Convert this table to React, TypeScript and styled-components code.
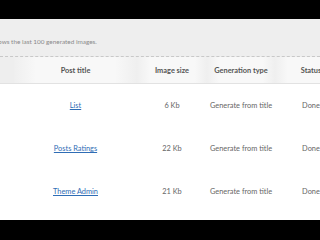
import * as React from "react";
import { createGlobalStyle, styled } from "styled-components";

interface ImageRow {
    id: string;
    title: string;
    size: string;
    type: string;
    status: string;
}

const rows: ImageRow[] = [
    { id: "1", title: "List", size: "6 Kb", type: "Generate from title", status: "Done" },
    { id: "2", title: "Posts Ratings", size: "22 Kb", type: "Generate from title", status: "Done" },
    { id: "3", title: "Theme Admin", size: "21 Kb", type: "Generate from title", status: "Done" },
];

const columns = "14px 123px 70px 68px 72px";

export default function App() {
    return (
        <>
            <GlobalStyle />
            <Screen>
                <TopBar />
                <Notice>
                    <NoticeText>This table shows the last 100 generated images.</NoticeText>
                </Notice>
                <Table>
                    <HeaderRow>
                        <HeaderCell $edge />
                        <HeaderCell>Post title</HeaderCell>
                        <HeaderCell>Image size</HeaderCell>
                        <HeaderCell>Generation type</HeaderCell>
                        <HeaderCell>Status</HeaderCell>
                    </HeaderRow>
                    {rows.map((row) => (
                        <Row key={row.id}>
                            <Cell />
                            <Cell>
                                <PostLink href="#">{row.title}</PostLink>
                            </Cell>
                            <Cell>{row.size}</Cell>
                            <Cell>{row.type}</Cell>
                            <Cell>{row.status}</Cell>
                        </Row>
                    ))}
                </Table>
                <BottomBar />
            </Screen>
        </>
    );
}

const GlobalStyle = createGlobalStyle`
    html, body {
        margin: 0;
        padding: 0;
        background: #000;
    }
    body {
        font-family: Lato, "Open Sans", sans-serif;
    }
`;

const Screen = styled.div`
    width: 320px;
    height: 240px;
    overflow: hidden;
    display: flex;
    flex-direction: column;
    background: #fff;
`;

const TopBar = styled.div`
    height: 19px;
    flex: none;
    background: #000;
`;

const Notice = styled.div`
    height: 38px;
    flex: none;
    box-sizing: border-box;
    background: #eeeeee;
    border-bottom: 1px dashed #c8c8c8;
    padding-top: 18px;
    overflow: hidden;
`;

const NoticeText = styled.p`
    margin: 0 0 0 -37px;
    font-size: 6.4px;
    line-height: 9px;
    color: #8a8a8a;
    white-space: nowrap;
`;

const Table = styled.div`
    flex: 1;
    display: flex;
    flex-direction: column;
`;

const HeaderRow = styled.div`
    display: grid;
    grid-template-columns: ${columns};
    height: 26px;
    background: #f1f1f1;
    border-bottom: 1px solid #e2e2e2;
`;

const HeaderCell = styled.div<{ $edge?: boolean }>`
    display: flex;
    align-items: center;
    justify-content: center;
    font-size: 7.4px;
    font-weight: 700;
    color: #555;
    white-space: nowrap;
    background: ${(p) =>
        p.$edge
            ? "#eeeeee"
            : "linear-gradient(to right, #efefef, #f8f8f8 18%, #f8f8f8 82%, #efefef)"};
`;

const Row = styled.div`
    display: grid;
    grid-template-columns: ${columns};
    height: 43px;
`;

const Cell = styled.div`
    display: flex;
    align-items: center;
    justify-content: center;
    font-size: 7.4px;
    color: #666;
    white-space: nowrap;
`;

const PostLink = styled.a`
    color: #2f6db5;
    text-decoration: underline;
`;

const BottomBar = styled.div`
    height: 20px;
    flex: none;
    background: #000;
`;
